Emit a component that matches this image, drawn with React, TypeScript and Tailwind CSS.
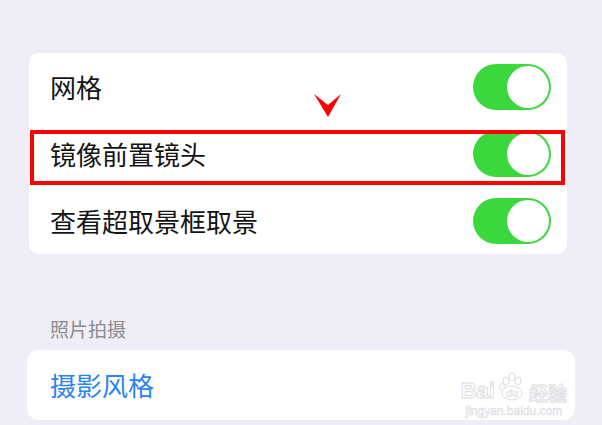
import React from 'react'

const font = { fontFamily: '"Noto Sans CJK SC", "Noto Sans", sans-serif' }

function Toggle() {
  return (
    <div className="relative h-[46px] w-[78px] shrink-0 rounded-full bg-[#3bd83d]">
      <div className="absolute right-[2px] top-[2px] h-[42px] w-[42px] rounded-full bg-white" />
    </div>
  )
}

function Row({ label }: { label: string }) {
  return (
    <div className="flex h-[67px] items-center justify-between pl-[21px] pr-[16px]">
      <span className="text-[26px] leading-none text-[#141414]">{label}</span>
      <Toggle />
    </div>
  )
}

function Watermark() {
  return (
    <div className="absolute right-[8px] top-[22px] flex flex-col items-center text-[#e2e2e8]">
      <div className="flex items-end gap-[2px]">
        <span className="text-[22px] font-bold leading-none text-white [-webkit-text-stroke:1px_#dcdce2]" style={{ fontFamily: '"Liberation Sans", sans-serif' }}>
          Bai
        </span>
        <svg width="30" height="30" viewBox="0 0 30 30">
          <g fill="white" stroke="#dcdce2" strokeWidth="1">
            <ellipse cx="9" cy="9" rx="3" ry="4" />
            <ellipse cx="15" cy="5" rx="3" ry="4" />
            <ellipse cx="21" cy="9" rx="3" ry="4" />
            <ellipse cx="5" cy="15" rx="2.5" ry="3.5" />
            <ellipse cx="15" cy="21" rx="10" ry="7" />
          </g>
          <text x="15" y="25" textAnchor="middle" fontSize="10" fontWeight="bold" fill="white" stroke="#dcdce2" strokeWidth="0.6" fontFamily="Liberation Sans, sans-serif">du</text>
        </svg>
        <span className="text-[19px] font-bold leading-none text-white [-webkit-text-stroke:1px_#dcdce2]">经验</span>
      </div>
      <span className="mt-[3px] text-[12px] leading-none text-white [-webkit-text-stroke:0.6px_#dcdce2]" style={{ fontFamily: '"Liberation Sans", sans-serif' }}>
        jingyan.baidu.com
      </span>
    </div>
  )
}

export default function App() {
  return (
    <div className="h-[425px] w-[602px] overflow-hidden bg-[#efeef7] pt-[53px]" style={font}>
      <div className="relative ml-[29px] w-[538px] rounded-[10px] bg-white">
        <Row label="网格" />
        <Row label="镜像前置镜头" />
        <Row label="查看超取景框取景" />

        {/* red highlight box */}
        <div className="absolute left-[1px] top-[77px] h-[55px] w-[535px] border-[4px] border-[#ff0000]" />
        {/* red chevron */}
        <svg className="absolute left-[285px] top-[41px]" width="28" height="24" viewBox="0 0 28 24">
          <polygon points="0,0 14,11 27,0 14,23" fill="#ff0000" />
        </svg>
      </div>

      <div className="ml-[50px] mt-[65px] text-[19px] leading-none text-[#8b8b90]">照片拍摄</div>

      <div className="relative ml-[27px] mt-[12px] flex h-[70px] w-[548px] items-center rounded-[12px] bg-white pl-[23px]">
        <span className="text-[26px] leading-none text-[#2a84f2]">摄影风格</span>
        <Watermark />
      </div>
    </div>
  )
}
